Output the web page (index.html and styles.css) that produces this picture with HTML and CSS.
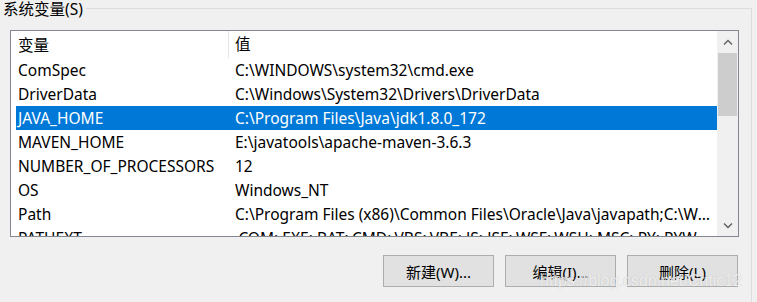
FILE: index.html
```html
<!DOCTYPE html>
<html lang="zh-CN">
<head>
    <meta charset="UTF-8">
    <meta name="viewport" content="width=device-width, initial-scale=1.0">
    <title>系统变量</title>
    <link rel="stylesheet" href="styles.css">
</head>
<body>
    <div class="group">
        <div class="group-title">系统变量(S)</div>
        <div class="list">
            <div class="list-body">
                <div class="row header">
                    <div class="cell name">变量</div>
                    <div class="cell value">值</div>
                </div>
                <div class="row">
                    <div class="cell name">ComSpec</div>
                    <div class="cell value">C:\WINDOWS\system32\cmd.exe</div>
                </div>
                <div class="row">
                    <div class="cell name">DriverData</div>
                    <div class="cell value">C:\Windows\System32\Drivers\DriverData</div>
                </div>
                <div class="row selected">
                    <div class="cell name">JAVA_HOME</div>
                    <div class="cell value">C:\Program Files\Java\jdk1.8.0_172</div>
                </div>
                <div class="row">
                    <div class="cell name">MAVEN_HOME</div>
                    <div class="cell value">E:\javatools\apache-maven-3.6.3</div>
                </div>
                <div class="row">
                    <div class="cell name">NUMBER_OF_PROCESSORS</div>
                    <div class="cell value">12</div>
                </div>
                <div class="row">
                    <div class="cell name">OS</div>
                    <div class="cell value">Windows_NT</div>
                </div>
                <div class="row">
                    <div class="cell name">Path</div>
                    <div class="cell value">C:\Program Files (x86)\Common Files\Oracle\Java\javapath;C:\WINDOWS\system32</div>
                </div>
                <div class="row">
                    <div class="cell name">PATHEXT</div>
                    <div class="cell value">.COM;.EXE;.BAT;.CMD;.VBS;.VBE;.JS;.JSE;.WSF;.WSH;.MSC;.PY;.PYW</div>
                </div>
            </div>
            <div class="scrollbar">
                <div class="arrow">
                    <svg width="10" height="6" viewBox="0 0 10 6"><path d="M1 5.5 L5 1.5 L9 5.5" fill="none" stroke="#606060" stroke-width="1.4"/></svg>
                </div>
                <div class="track">
                    <div class="thumb"></div>
                </div>
                <div class="arrow">
                    <svg width="10" height="6" viewBox="0 0 10 6"><path d="M1 0.5 L5 4.5 L9 0.5" fill="none" stroke="#606060" stroke-width="1.4"/></svg>
                </div>
            </div>
        </div>
        <div class="buttons">
            <button class="btn">新建(W)...</button>
            <button class="btn">编辑(I)...</button>
            <button class="btn">删除(L)</button>
            <div class="watermark">https://blog.csdn.net/Critic12</div>
        </div>
    </div>
</body>
</html>
```

FILE: styles.css
```css
body {
    margin: 0;
    padding: 0;
    width: 757px;
    height: 302px;
    background: #f0f0f0;
    font-family: "Noto Sans", "Noto Sans CJK SC", sans-serif;
    font-size: 15.5px;
    color: #000;
    overflow: hidden;
}
.group {
    position: relative;
    margin-top: 8px;
    width: 752px;
    height: 294px;
    border-top: 1px solid #dcdcdc;
    border-right: 1px solid #dcdcdc;
    box-sizing: border-box;
}
.group-title {
    position: absolute;
    top: -9px;
    left: 0;
    padding: 0 3px 0 3px;
    background: #f0f0f0;
    line-height: 19px;
    font-size: 15.5px;
}
.list {
    margin: 21px 0 0 10px;
    width: 729px;
    height: 207px;
    border: 1px solid #828790;
    box-sizing: border-box;
    background: #fff;
    display: flex;
    overflow: hidden;
}
.list-body {
    flex: 1;
    padding-left: 5px;
    overflow: hidden;
}
.row {
    display: flex;
    height: 24px;
    align-items: center;
    white-space: nowrap;
}
.row.header {
    height: 27px;
}
.cell {
    overflow: hidden;
    text-overflow: ellipsis;
}
.name {
    width: 212px;
    padding-left: 2px;
    flex-shrink: 0;
    box-sizing: border-box;
}
.value {
    flex: 1;
    padding-left: 7px;
    padding-right: 4px;
}
.header .value {
    border-left: 1px solid #e5e5e5;
    padding-left: 6px;
    height: 27px;
    line-height: 27px;
}
.row.selected {
    background: #0078d7;
    color: #fff;
}
.scrollbar {
    width: 21px;
    flex-shrink: 0;
    background: #f0f0f0;
    display: flex;
    flex-direction: column;
}
.arrow {
    height: 21px;
    display: flex;
    align-items: center;
    justify-content: center;
}
.track {
    flex: 1;
    padding: 1px 1px 0 1px;
}
.thumb {
    height: 63px;
    background: #cdcdcd;
}
.buttons {
    position: relative;
    display: flex;
    justify-content: flex-end;
    gap: 11px;
    margin-top: 18px;
    padding-right: 13px;
}
.btn {
    width: 111px;
    height: 32px;
    background: #e1e1e1;
    border: 1px solid #adadad;
    font-family: "Noto Sans", "Noto Sans CJK SC", sans-serif;
    font-size: 15px;
    color: #000;
    padding: 0;
}
.watermark {
    position: absolute;
    right: 9px;
    top: 17px;
    font-family: "Liberation Sans", sans-serif;
    font-size: 16px;
    line-height: 18px;
    color: rgba(255, 255, 255, 0.75);
    text-shadow: 0 0 1px rgba(140, 140, 140, 0.5);
    pointer-events: none;
}
```
